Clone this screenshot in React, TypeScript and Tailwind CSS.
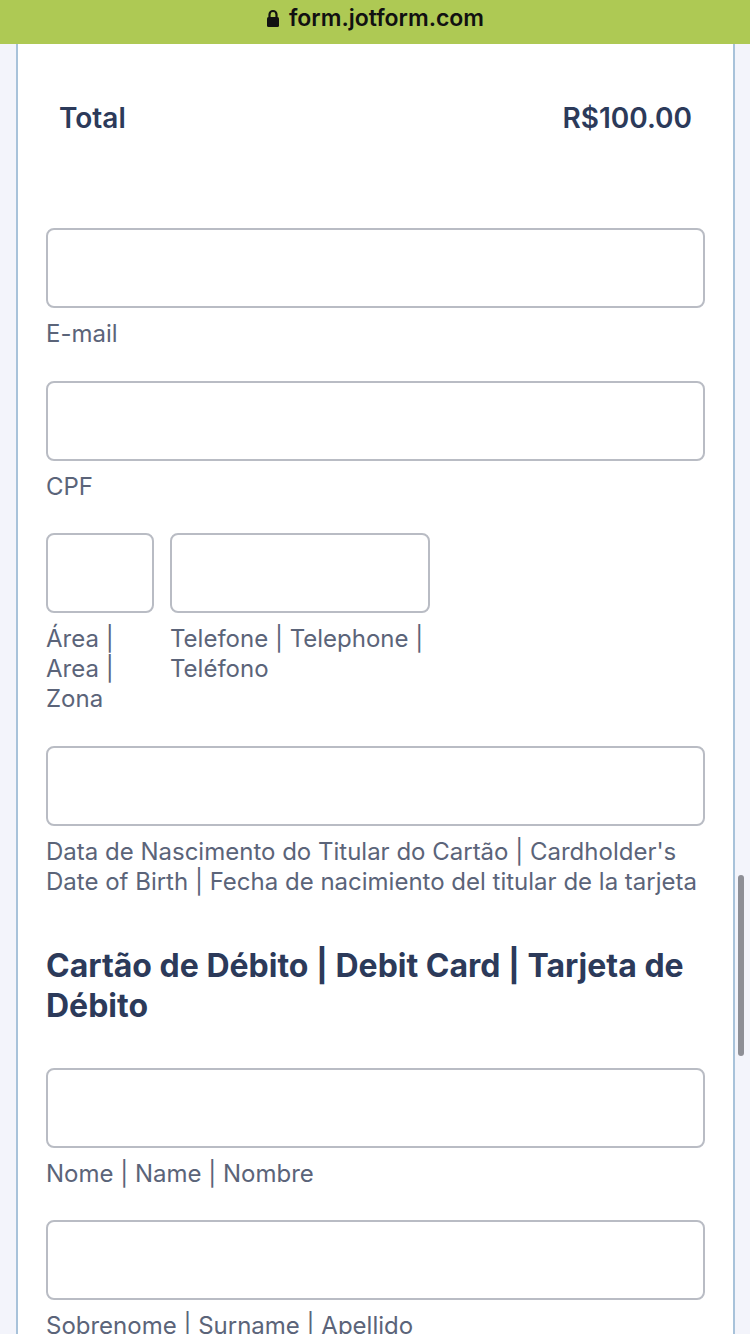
import React from 'react';

const font = { fontFamily: 'Inter, "Noto Sans", sans-serif' };

const Field: React.FC<{ label: string; className?: string }> = ({ label, className }) => (
  <div className={className}>
    <div className="h-[80px] rounded-[8px] border-2 border-[#b9bcc4] bg-white" />
    <p className="mt-[11px] text-[24px] leading-[30px] text-[#5b6479]">{label}</p>
  </div>
);

const LockIcon: React.FC = () => (
  <svg width="14" height="19" viewBox="0 0 14 19" className="mr-[9px]">
    <path d="M3.5 8V5.5a3.5 3.5 0 0 1 7 0V8" fill="none" stroke="#111" strokeWidth="2.2" />
    <rect x="1" y="8" width="12" height="10" rx="1.5" fill="#111" />
  </svg>
);

export default function App() {
  return (
    <div className="relative min-h-[1334px] w-[750px] overflow-hidden bg-[#f3f4fb]" style={font}>
      {/* Browser address bar */}
      <div className="flex h-[44px] items-center justify-center bg-[#aec954] pb-[8px]">
        <LockIcon />
        <span className="text-[23px] font-semibold text-[#111]">form.jotform.com</span>
      </div>

      {/* Form card */}
      <div className="mx-[16px] min-h-[1290px] w-[719px] border-x-2 border-[#a8c2da] bg-white">
        <div className="flex items-center justify-between px-[41px] pt-[56px] text-[28px] font-semibold leading-[36px] text-[#2c3a5a]">
          <span>Total</span>
          <span>R$100.00</span>
        </div>

        <div className="px-[28px] pt-[92px]">
          <Field label="E-mail" />
          <Field label="CPF" className="mt-[32px]" />

          <div className="mt-[31px] flex gap-[16px]">
            <Field label="Área | Area | Zona" className="w-[108px]" />
            <Field label="Telefone | Telephone | Teléfono" className="w-[260px]" />
          </div>

          <Field
            label="Data de Nascimento do Titular do Cartão | Cardholder's Date of Birth | Fecha de nacimiento del titular de la tarjeta"
            className="mt-[32px]"
          />

          <h2 className="mt-[49px] text-[32px] font-bold leading-[40px] text-[#2c3a5a]">
            Cartão de Débito | Debit Card | Tarjeta de Débito
          </h2>

          <Field label="Nome | Name | Nombre" className="mt-[42px]" />
          <Field label="Sobrenome | Surname | Apellido" className="mt-[31px]" />
        </div>
      </div>

      {/* Overlay scrollbar */}
      <div className="absolute left-[738px] top-[875px] h-[181px] w-[6px] rounded-full bg-[#8e8f96]" />
    </div>
  );
}
